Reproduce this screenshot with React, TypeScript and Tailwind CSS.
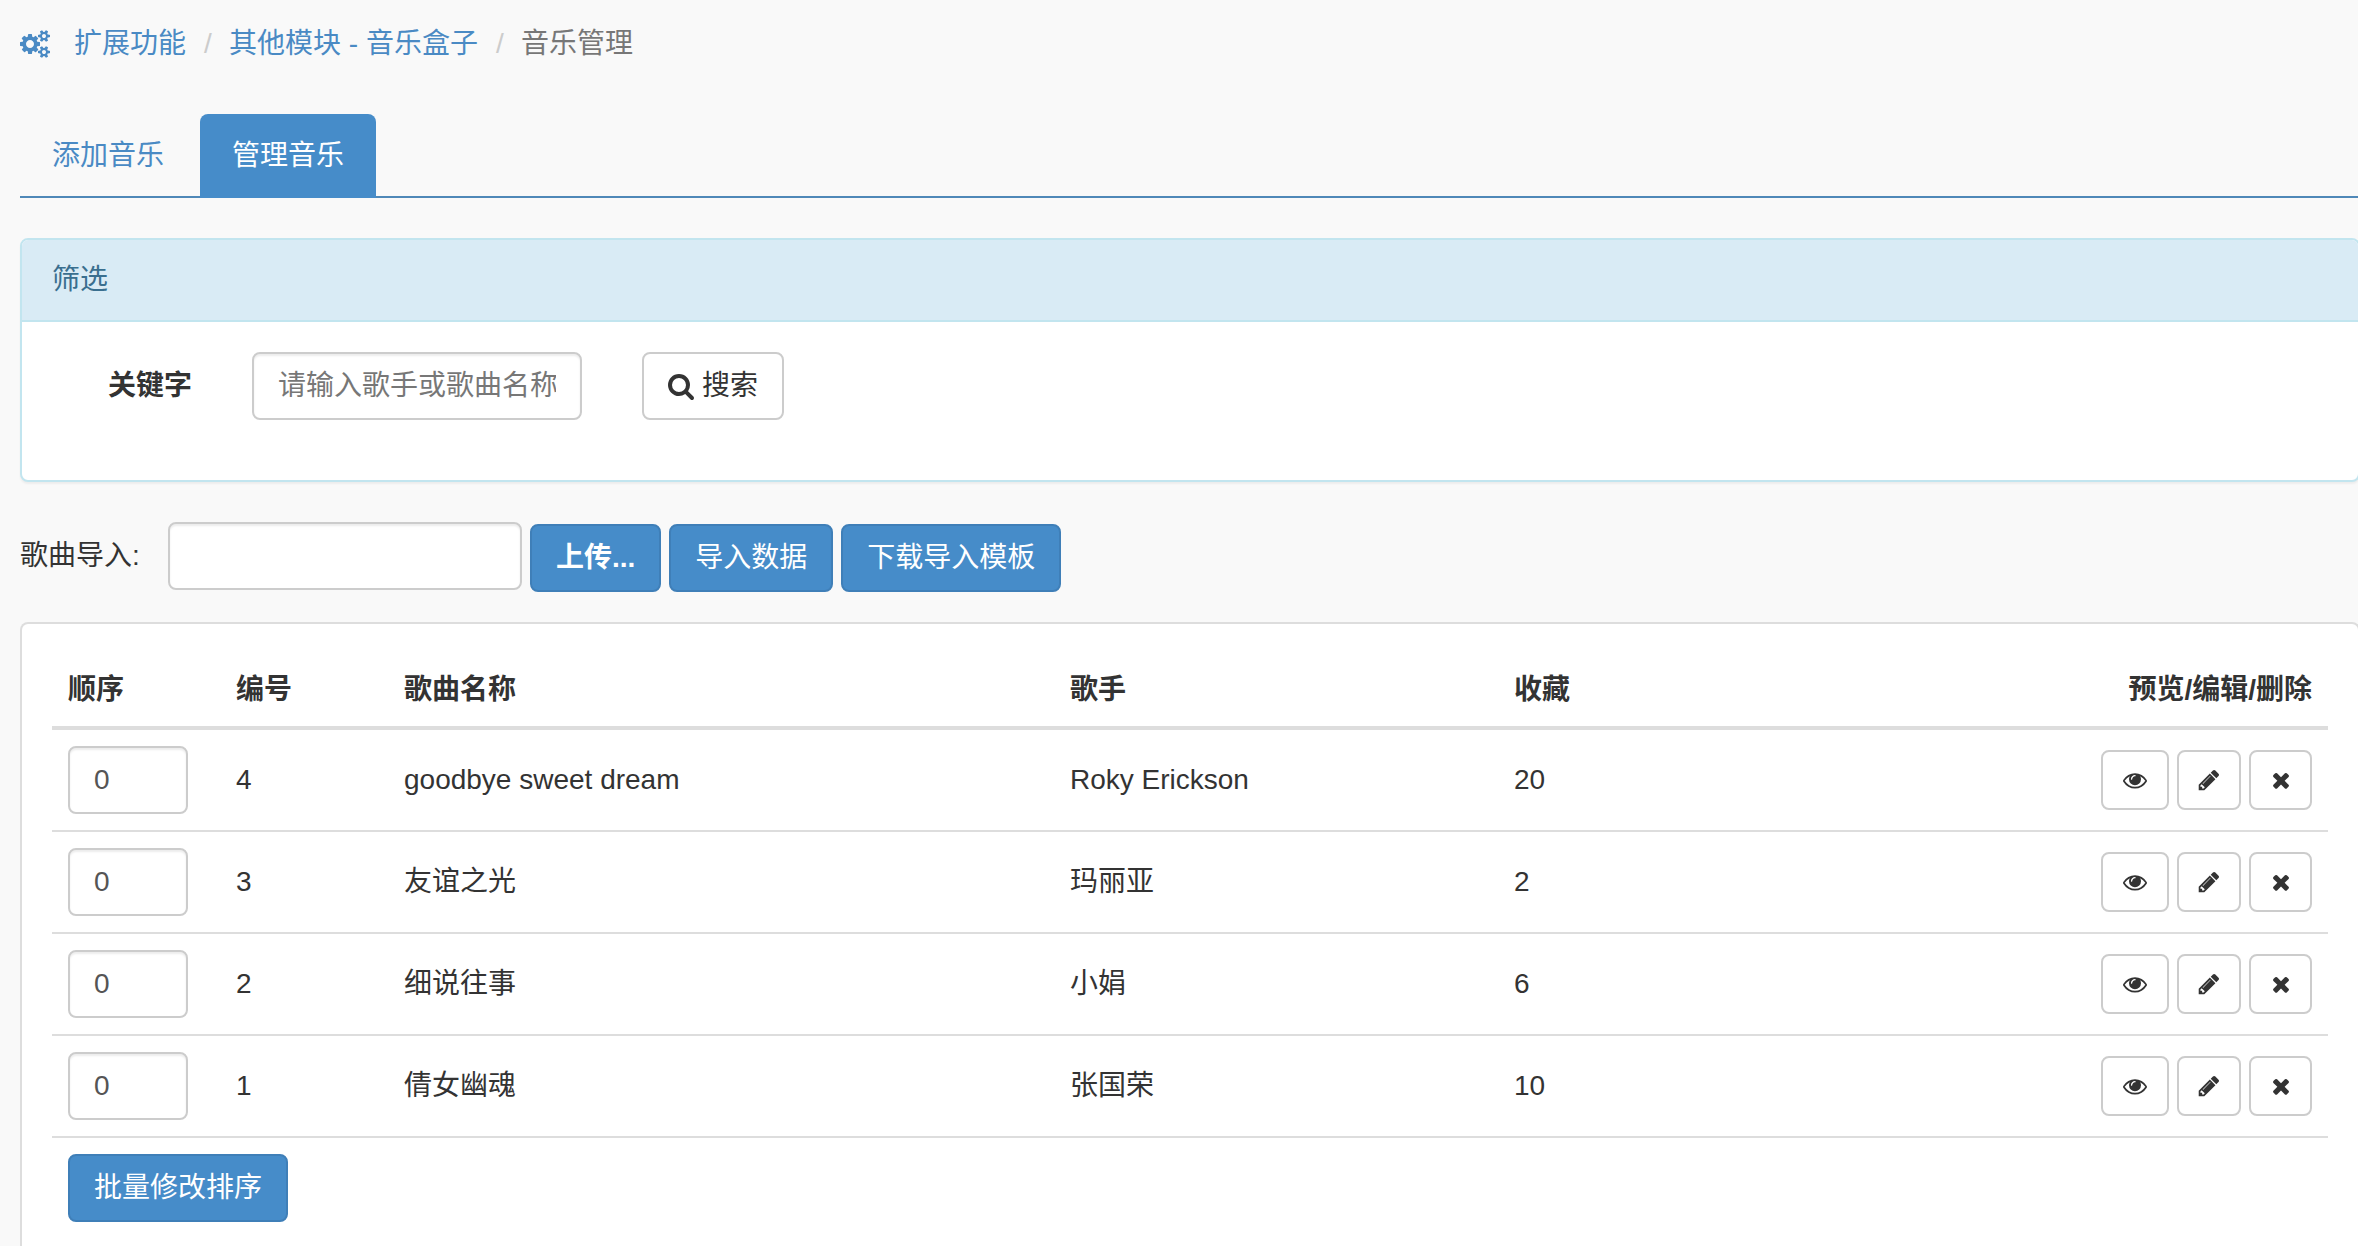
import React, { useState } from 'react';

type Song = {
  id: number;
  order: string;
  name: string;
  singer: string;
  favorites: number;
};

type IconProps = {
  className?: string;
};

const initialSongs: Song[] = [
  { id: 4, order: '0', name: 'goodbye sweet dream', singer: 'Roky Erickson', favorites: 20 },
  { id: 3, order: '0', name: '友谊之光', singer: '玛丽亚', favorites: 2 },
  { id: 2, order: '0', name: '细说往事', singer: '小娟', favorites: 6 },
  { id: 1, order: '0', name: '倩女幽魂', singer: '张国荣', favorites: 10 },
];

const CogsIcon = ({ className }: IconProps) => (
  <svg viewBox="0 0 1920 1792" fill="currentColor" className={className} aria-hidden="true">
    <path d="M896 896q0-106-75-181t-181-75-181 75-75 181 75 181 181 75 181-75 75-181zm768 512q0-52-38-90t-90-38-90 38-38 90q0 53 37.5 90.5t90.5 37.5 90.5-37.5 37.5-90.5zm0-1024q0-52-38-90t-90-38-90 38-38 90q0 53 37.5 90.5t90.5 37.5 90.5-37.5 37.5-90.5zm-384 421v185q0 10-7 19.5t-16 10.5l-155 24q-11 35-32 76 34 48 90 115 7 11 7 20 0 12-7 19-23 30-82.5 89.5t-78.5 59.5q-11 0-21-7l-115-90q-37 19-77 31-11 108-23 155-7 24-30 24h-186q-11 0-20-7.5t-10-17.5l-23-153q-34-10-75-31l-118 89q-7 7-20 7-11 0-21-8-144-133-144-160 0-9 7-19 10-14 41-53t47-61q-23-44-35-82l-152-24q-10-1-17-9.5t-7-19.5v-185q0-10 7-19.5t16-10.5l155-24q11-35 32-76-34-48-90-115-7-11-7-20 0-12 7-20 22-30 82-89t79-59q11 0 21 7l115 90q34-18 77-32 11-108 23-154 7-24 30-24h186q11 0 20 7.5t10 17.5l23 153q34 10 75 31l118-89q8-7 20-7 11 0 21 8 144 133 144 160 0 8-7 19-12 16-42 54t-45 60q23 48 34 82l152 23q10 2 17 10.5t7 19.5zm640 533v140q0 16-149 31-12 27-30 52 51 113 51 138 0 4-4 7-122 71-124 71-8 0-46-47t-52-68q-20 2-30 2t-30-2q-14 21-52 68t-46 47q-2 0-124-71-4-3-4-7 0-25 51-138-18-25-30-52-149-15-149-31v-140q0-16 149-31 13-29 30-52-51-113-51-138 0-4 4-7 4-2 35-20t59-34 30-16q8 0 46 46.5t52 67.5q20-2 30-2t30 2q51-71 92-112l6-2q4 0 124 70 4 3 4 7 0 25-51 138 17 23 30 52 149 15 149 31zm0-1024v140q0 16-149 31-12 27-30 52 51 113 51 138 0 4-4 7-122 71-124 71-8 0-46-47t-52-68q-20 2-30 2t-30-2q-14 21-52 68t-46 47q-2 0-124-71-4-3-4-7 0-25 51-138-18-25-30-52-149-15-149-31v-140q0-16 149-31 13-29 30-52-51-113-51-138 0-4 4-7 4-2 35-20t59-34 30-16q8 0 46 46.5t52 67.5q20-2 30-2t30 2q51-71 92-112l6-2q4 0 124 70 4 3 4 7 0 25-51 138 17 23 30 52 149 15 149 31z" />
  </svg>
);

const SearchIcon = ({ className }: IconProps) => (
  <svg viewBox="64 0 1664 1792" fill="currentColor" className={className} aria-hidden="true">
    <path d="M1216 832q0-185-131.5-316.5t-316.5-131.5-316.5 131.5-131.5 316.5 131.5 316.5 316.5 131.5 316.5-131.5 131.5-316.5zm512 832q0 52-38 90t-90 38q-54 0-90-38l-343-342q-179 124-399 124-143 0-273.5-55.5t-225-150-150-225-55.5-273.5 55.5-273.5 150-225 225-150 273.5-55.5 273.5 55.5 225 150 150 225 55.5 273.5q0 220-124 399l343 343q37 37 37 90z" />
  </svg>
);

const EyeIcon = ({ className }: IconProps) => (
  <svg viewBox="0 0 1792 1792" fill="currentColor" className={className} aria-hidden="true">
    <path d="M1664 960q-152-236-381-353 61 104 61 225 0 185-131.5 316.5t-316.5 131.5-316.5-131.5-131.5-316.5q0-121 61-225-229 117-381 353 133 205 333.5 326.5t434.5 121.5 434.5-121.5 333.5-326.5zm-720-384q0-20-14-34t-34-14q-125 0-214.5 89.5t-89.5 214.5q0 20 14 34t34 14 34-14 14-34q0-86 61-147t147-61q20 0 34-14t14-34zm848 384q0 34-20 69-140 230-376.5 368.5t-499.5 138.5-499.5-139-376.5-368q-20-35-20-69t20-69q140-229 376.5-368t499.5-139 499.5 139 376.5 368q20 35 20 69z" />
  </svg>
);

const PencilIcon = ({ className }: IconProps) => (
  <svg viewBox="0 0 1792 1792" fill="currentColor" className={className} aria-hidden="true">
    <path d="M491 1536l91-91-235-235-91 91v107h128v128h107zm523-928q0-22-22-22-10 0-17 7l-542 542q-7 7-7 17 0 22 22 22 10 0 17-7l542-542q7-7 7-17zm-54-192l416 416-832 832h-416v-416zm683 96q0 53-37 90l-166 166-416-416 166-165q36-38 90-38 53 0 91 38l235 234q37 39 37 91z" />
  </svg>
);

const TimesIcon = ({ className }: IconProps) => (
  <svg viewBox="0 0 1792 1792" fill="currentColor" className={className} aria-hidden="true">
    <path d="M1490 1322q0 40-28 68l-136 136q-28 28-68 28t-68-28l-294-294-294 294q-28 28-68 28t-68-28l-136-136q-28-28-28-68t28-68l294-294-294-294q-28-28-28-68t28-68l136-136q28-28 68-28t68 28l294 294 294-294q28-28 68-28t68 28l136 136q28 28 28 68t-28 68l-294 294 294 294q28 28 28 68z" />
  </svg>
);

const inputClass =
  'h-[68px] rounded-lg border-2 border-[#cccccc] bg-white px-6 text-[#555555] shadow-[inset_0_2px_2px_rgba(0,0,0,0.075)] outline-none placeholder:text-[#777777] focus:border-[#66afe9]';
const primaryClass =
  'h-[68px] rounded-lg border-2 border-[#3f7fb8] bg-[#468cc9] px-6 text-white hover:bg-[#3071a9]';
const iconButtonClass =
  'flex h-[60px] items-center justify-center rounded-lg border-2 border-[#cccccc] bg-white hover:bg-[#ebebeb]';

const App = () => {
  const [songs, setSongs] = useState<Song[]>(initialSongs);
  const [keyword, setKeyword] = useState('');

  const updateOrder = (id: number, order: string) => {
    setSongs(songs.map(song => (song.id === id ? { ...song, order } : song)));
  };

  return (
    <div className="overflow-x-hidden bg-[#f9f9f9]">
      <main className="-mr-0.5 flex min-h-screen flex-col pl-5 pt-6 font-['Liberation_Sans','Noto_Sans_CJK_SC',sans-serif] text-[28px] leading-10 text-[#333333]">
        {/* Breadcrumb */}
        <nav aria-label="breadcrumb">
          <ol className="flex items-center text-[#4a8ac4]">
            <li className="mr-6">
              <CogsIcon className="h-7 w-[30px]" />
            </li>
            <li>
              <a href="#extensions">扩展功能</a>
            </li>
            <li className="w-[43px] pl-[18px] text-[#cccccc]">/</li>
            <li>
              <a href="#music-box">其他模块 - 音乐盒子</a>
            </li>
            <li className="w-[43px] pl-[18px] text-[#cccccc]">/</li>
            <li className="text-[#777777]">音乐管理</li>
          </ol>
        </nav>

        {/* Tabs */}
        <ul className="mt-[50px] flex gap-1 border-b-2 border-[#4f88b8]">
          <li>
            <a href="#add" className="block px-8 pb-5 pt-[22px] text-[#4a8ac4]">
              添加音乐
            </a>
          </li>
          <li className="-mb-0.5">
            <a href="#manage" className="block rounded-t-lg bg-[#468cc9] px-8 py-[22px] text-white">
              管理音乐
            </a>
          </li>
        </ul>

        {/* Filter */}
        <section className="mt-10 rounded-lg border-2 border-[#c2e5ef] bg-white shadow-[0_2px_2px_rgba(0,0,0,0.05)]">
          <h2 className="rounded-t-md border-b-2 border-[#c2e5ef] bg-[#d9ebf5] px-[30px] py-5 text-[#3a6f8f]">
            筛选
          </h2>
          <form className="flex items-center px-[30px] pb-[60px] pt-[30px]" onSubmit={e => e.preventDefault()}>
            <label htmlFor="keyword" className="w-[200px] pl-14 font-bold">
              关键字
            </label>
            <input
              id="keyword"
              type="text"
              value={keyword}
              onChange={e => setKeyword(e.target.value)}
              placeholder="请输入歌手或歌曲名称"
              className={`w-[330px] ${inputClass}`}
            />
            <button
              type="submit"
              className="ml-[60px] flex h-[68px] items-center gap-2 rounded-lg border-2 border-[#cccccc] bg-white px-6 hover:bg-[#ebebeb]"
            >
              <SearchIcon className="h-7 w-[26px]" />
              搜索
            </button>
          </form>
        </section>

        {/* Import */}
        <div className="mt-10 flex items-start">
          <label htmlFor="import-file" className="w-[148px] pt-[14px]">
            歌曲导入:
          </label>
          <input id="import-file" type="text" className={`w-[354px] ${inputClass}`} />
          <div className="ml-2 mt-0.5 flex gap-2">
            <button type="button" className={`font-bold ${primaryClass}`}>
              上传...
            </button>
            <button type="button" className={primaryClass}>
              导入数据
            </button>
            <button type="button" className={primaryClass}>
              下载导入模板
            </button>
          </div>
        </div>

        {/* Song list */}
        <section className="mt-[30px] grow rounded-t-lg border-2 border-b-0 border-[#dddddd] bg-white px-[30px] pt-[30px]">
          <table className="w-full table-fixed border-collapse text-left">
            <thead>
              <tr className="border-b-4 border-[#dddddd]">
                <th className="w-[168px] px-4 pb-4 pt-4">顺序</th>
                <th className="w-[168px] px-4">编号</th>
                <th className="w-[666px] px-4">歌曲名称</th>
                <th className="w-[444px] px-4">歌手</th>
                <th className="px-4">收藏</th>
                <th className="px-4 text-right">预览/编辑/删除</th>
              </tr>
            </thead>
            <tbody>
              {songs.map(song => (
                <tr key={song.id} className="border-b-2 border-[#dddddd]">
                  <td className="px-4 py-4">
                    <input
                      type="text"
                      aria-label="顺序"
                      value={song.order}
                      onChange={e => updateOrder(song.id, e.target.value)}
                      className={`block w-[120px] ${inputClass}`}
                    />
                  </td>
                  <td className="px-4">{song.id}</td>
                  <td className="px-4">{song.name}</td>
                  <td className="px-4">{song.singer}</td>
                  <td className="px-4">{song.favorites}</td>
                  <td className="px-4">
                    <div className="flex justify-end gap-2">
                      <button type="button" aria-label="预览" className={`w-[68px] ${iconButtonClass}`}>
                        <EyeIcon className="size-6" />
                      </button>
                      <button type="button" aria-label="编辑" className={`w-16 ${iconButtonClass}`}>
                        <PencilIcon className="size-6" />
                      </button>
                      <button type="button" aria-label="删除" className={`w-[63px] ${iconButtonClass}`}>
                        <TimesIcon className="size-6" />
                      </button>
                    </div>
                  </td>
                </tr>
              ))}
            </tbody>
          </table>
          <div className="px-4 pt-4">
            <button type="button" className={primaryClass}>
              批量修改排序
            </button>
          </div>
        </section>
      </main>
    </div>
  );
};

export default App;
